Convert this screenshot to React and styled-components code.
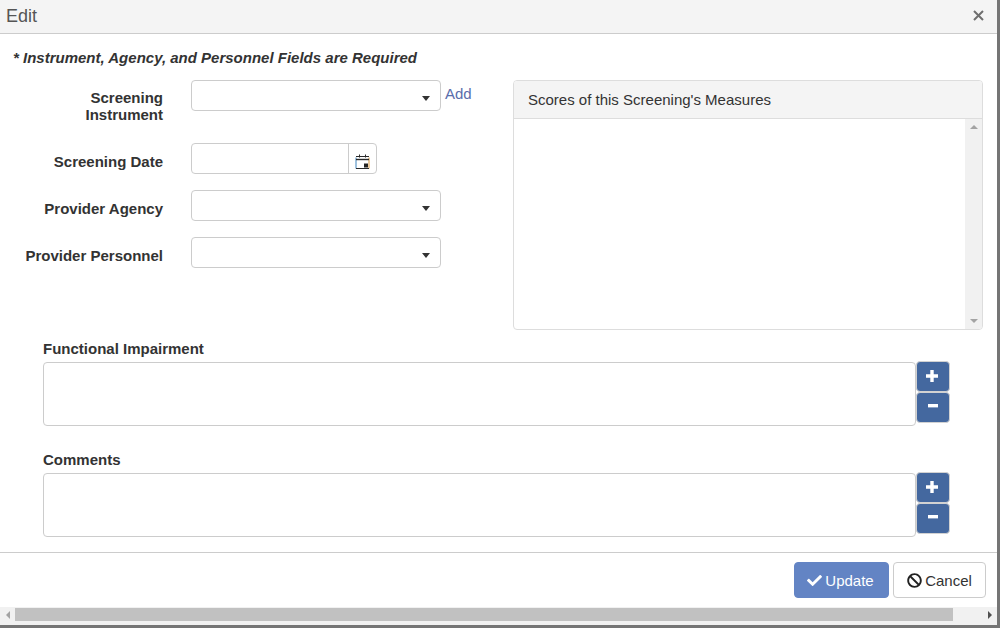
import React from "react";
import styled, { createGlobalStyle } from "styled-components";
import { FaCheck, FaBan } from "react-icons/fa";

const Global = createGlobalStyle`
  html, body { margin: 0; padding: 0; background: #fff; overflow: hidden; }
  * { box-sizing: border-box; }
  body { font-family: "Liberation Sans", Arial, sans-serif; font-size: 15px; color: #333; }
`;
const Page = styled.div`
  width: 1000px; height: 628px; background: #757575; padding: 0 3px 3px 0;
`;
const Dialog = styled.div`
  height: 100%; background: #fff; display: flex; flex-direction: column;
`;
const Header = styled.header`
  height: 34px; flex: none; background: #f4f4f4; border-bottom: 1px solid #ccc;
  display: flex; align-items: center; justify-content: space-between; padding: 0 13px 0 6px;
  font-size: 18px; color: #555;
`;
const CloseSvg = styled.svg`
  width: 11px; height: 11px; margin-top: -2px;
`;
const Body = styled.main`
  height: 518px; flex: none; padding: 14px 14px 0 13px;
`;
const Note = styled.div`
  font-weight: bold; font-style: italic; color: #333; line-height: 20px; height: 32px;
`;
const Top = styled.div`
  display: flex; justify-content: space-between; height: 250px;
`;
const Form = styled.div`
  display: flex; flex-direction: column; gap: 16px; width: 470px;
`;
const Row = styled.div`
  display: grid; grid-template-columns: 150px 1fr; column-gap: 28px; align-items: start;
  margin-bottom: ${p => p.$mb || 0}px;
`;
const Label = styled.label`
  font-weight: bold; text-align: right; line-height: 17px; padding-top: ${p => p.$two ? 9 : 10}px;
`;
const Control = styled.div`
  display: flex; align-items: flex-start;
`;
const Select = styled.div`
  width: 250px; height: 31px; background: #fff; border: 1px solid #ccc; border-radius: 4px;
  display: flex; align-items: center; justify-content: flex-end; padding: 6px 10px 0 0;
`;
const Caret = styled.span`
  width: 0; height: 0; border-left: 4px solid transparent; border-right: 4px solid transparent;
  border-top: 5px solid #333;
`;
const AddLink = styled.a`
  color: #5a6dab; margin: 5px 0 0 4px; line-height: 17px;
`;
const DateBox = styled.div`
  width: 186px; height: 31px; border: 1px solid #ccc; border-radius: 4px; display: flex; justify-content: flex-end;
`;
const DateAddon = styled.div`
  width: 28px; border-left: 1px solid #ccc; display: flex; align-items: center; justify-content: center; padding-top: 6px;
`;
const Panel = styled.section`
  width: 470px; height: 250px; border: 1px solid #ddd; border-radius: 4px; display: flex; flex-direction: column; overflow: hidden;
`;
const PanelHead = styled.div`
  height: 38px; flex: none; background: #f4f4f4; border-bottom: 1px solid #ddd;
  padding: 0 14px; display: flex; align-items: center; color: #333;
`;
const PanelBody = styled.div`
  flex: 1; display: flex; justify-content: flex-end;
`;
const VScroll = styled.div`
  width: 17px; background: #f1f1f1; display: flex; flex-direction: column; justify-content: space-between; align-items: center; padding: 6px 0;
`;
const VArrow = styled.span`
  width: 0; height: 0; border-left: 4px solid transparent; border-right: 4px solid transparent;
  ${p => p.$down ? "border-top: 4px solid #a3a3a3;" : "border-bottom: 4px solid #a3a3a3;"}
`;
const Field = styled.div`
  margin: ${p => p.$mt}px 0 0 30px;
`;
const FieldLabel = styled.div`
  font-weight: bold; line-height: 17px; margin-bottom: 5px;
`;
const FieldRow = styled.div`
  display: flex; align-items: flex-start;
`;
const TextBox = styled.div`
  width: 873px; height: 64px; border: 1px solid #ccc; border-radius: 4px; background: #fff;
`;
const Steppers = styled.div`
  display: flex; flex-direction: column; margin-top: -1px;
`;
const Step = styled.button`
  width: 34px; height: 31px; padding: 0; border: 1px solid #d2d2d2; border-radius: 4px; background: #44689f;
  display: flex; align-items: center; justify-content: center;
`;
const PlusSvg = styled.svg`
  width: 12px; height: 12px; margin: 0 2px 2px 0;
`;
const MinusSvg = styled.svg`
  width: 10px; height: 4px; margin-bottom: 4px;
`;
const Footer = styled.footer`
  height: 55px; flex: none; border-top: 1px solid #ccc; display: flex; justify-content: flex-end; align-items: flex-start;
  gap: 4px; padding: 9px 11px 0 0;
`;
const Button = styled.button`
  height: 36px; width: ${p => p.$w}px; border-radius: 4px; font: 15px "Liberation Sans", Arial, sans-serif;
  display: flex; align-items: center; justify-content: center; gap: 3px;
  padding: 0 ${p => p.$primary ? 2 : 0}px 0 0;
  background: ${p => p.$primary ? "#6384c4" : "#fff"};
  color: ${p => p.$primary ? "#fff" : "#333"};
  border: 1px solid ${p => p.$primary ? "#6384c4" : "#ccc"};
  svg { width: 15px; height: 15px; color: ${p => p.$primary ? "#fff" : "#222"}; }
`;
const HScroll = styled.div`
  flex: 1; background: #f1f1f1; display: flex; align-items: center; padding: 0 0 3px;
`;
const HArrowBox = styled.div`
  width: 15px; display: flex; justify-content: center; align-items: center; flex: none;
`;
const HArrow = styled.span`
  width: 0; height: 0; border-top: 4px solid transparent; border-bottom: 4px solid transparent;
  ${p => p.$right ? "border-left: 4px solid #505050;" : "border-right: 4px solid #a3a3a3;"}
`;
const HThumb = styled.div`
  width: 938px; height: 13px; background: #c1c1c1; flex: none;
`;
const HSpacer = styled.div` flex: 1; `;

const CloseIcon = () => (
  <CloseSvg viewBox="0 0 11 11" fill="none" stroke="#6e6e6e" strokeWidth="2">
    <path d="M1 1l9 9M10 1l-9 9" />
  </CloseSvg>
);

const Calendar = () => (
  <svg width="15" height="15" viewBox="0 0 15 15" fill="none" strokeWidth="1">
    <path d="M1 3.5V14.5" stroke="#3f86c0" />
    <path d="M14 3.5V14.5" stroke="#d8963a" />
    <path d="M1 2.5h13M1 14.5h13" stroke="#2a2a2a" />
    <path d="M1 5.5h13" stroke="#2a2a2a" strokeWidth="1.4" />
    <path d="M4.5 0.5v3M10.5 0.5v3" stroke="#2a2a2a" />
    <rect x="9" y="9.5" width="4" height="4" fill="#222" />
  </svg>
);

const Plus = () => (
  <PlusSvg viewBox="0 0 12 12" fill="#fff">
    <path d="M4.3 0h3.4v4.3H12v3.4H7.7V12H4.3V7.7H0V4.3h4.3z" />
  </PlusSvg>
);

const Minus = () => (
  <MinusSvg viewBox="0 0 10 4" fill="#fff">
    <rect width="10" height="3.4" />
  </MinusSvg>
);

const Stepper = () => (
  <Steppers>
    <Step><Plus /></Step>
    <Step><Minus /></Step>
  </Steppers>
);

export default function App() {
  return (
    <Page>
      <Global />
      <Dialog>
        <Header>Edit<CloseIcon /></Header>
        <Body>
          <Note>* Instrument, Agency, and Personnel Fields are Required</Note>
          <Top>
            <Form>
              <Row $mb={4}>
                <Label $two>Screening<br />Instrument</Label>
                <Control><Select><Caret /></Select><AddLink>Add</AddLink></Control>
              </Row>
              <Row>
                <Label>Screening Date</Label>
                <Control><DateBox><DateAddon><Calendar /></DateAddon></DateBox></Control>
              </Row>
              <Row>
                <Label>Provider Agency</Label>
                <Control><Select><Caret /></Select></Control>
              </Row>
              <Row>
                <Label>Provider Personnel</Label>
                <Control><Select><Caret /></Select></Control>
              </Row>
            </Form>
            <Panel>
              <PanelHead>Scores of this Screening's Measures</PanelHead>
              <PanelBody>
                <VScroll><VArrow /><VArrow $down /></VScroll>
              </PanelBody>
            </Panel>
          </Top>
          <Field $mt={10}>
            <FieldLabel>Functional Impairment</FieldLabel>
            <FieldRow><TextBox /><Stepper /></FieldRow>
          </Field>
          <Field $mt={25}>
            <FieldLabel>Comments</FieldLabel>
            <FieldRow><TextBox /><Stepper /></FieldRow>
          </Field>
        </Body>
        <Footer>
          <Button $primary $w={95}><FaCheck />Update</Button>
          <Button $w={93}><FaBan />Cancel</Button>
        </Footer>
        <HScroll>
          <HArrowBox><HArrow /></HArrowBox>
          <HThumb />
          <HSpacer />
          <HArrowBox><HArrow $right /></HArrowBox>
        </HScroll>
      </Dialog>
    </Page>
  );
}
